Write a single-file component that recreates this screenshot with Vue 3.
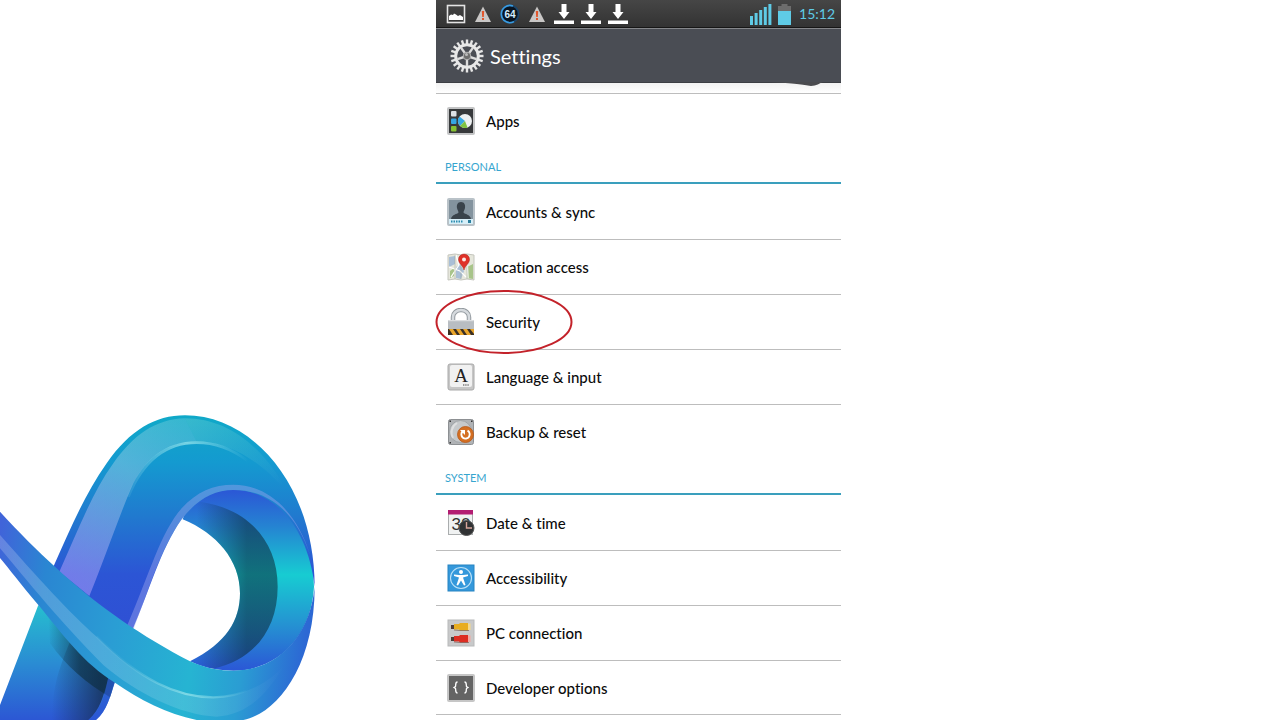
<template>
  <div class="page">
    <svg class="brand" viewBox="0 0 990 960" aria-hidden="true">
      <defs>
        <linearGradient id="rise" gradientUnits="userSpaceOnUse" x1="0" y1="46" x2="0" y2="690">
          <stop offset="0" stop-color="#10a9c8" />
          <stop offset=".22" stop-color="#149ad0" />
          <stop offset=".48" stop-color="#2178cf" />
          <stop offset=".74" stop-color="#2c55d5" />
          <stop offset="1" stop-color="#2f50d4" />
        </linearGradient>
        <linearGradient id="ring" gradientUnits="userSpaceOnUse" x1="0" y1="270" x2="0" y2="812">
          <stop offset="0" stop-color="#2b57d6" />
          <stop offset=".2" stop-color="#2583d2" />
          <stop offset=".47" stop-color="#17ccd2" />
          <stop offset=".75" stop-color="#2591d2" />
          <stop offset="1" stop-color="#2b57d6" />
        </linearGradient>
        <linearGradient id="shade" gradientUnits="userSpaceOnUse" x1="590" y1="0" x2="740" y2="0">
          <stop offset="0" stop-color="#0b2836" stop-opacity="0" />
          <stop offset="1" stop-color="#0b2836" stop-opacity=".55" />
        </linearGradient>
        <linearGradient id="sweep" gradientUnits="userSpaceOnUse" x1="0" y1="400" x2="944" y2="560">
          <stop offset="0" stop-color="#4064d9" />
          <stop offset=".16" stop-color="#2a86d2" />
          <stop offset=".4" stop-color="#2a9dd4" />
          <stop offset=".66" stop-color="#26b4d2" />
          <stop offset=".82" stop-color="#2a9dd3" />
          <stop offset="1" stop-color="#2c68d4" />
        </linearGradient>
        <linearGradient id="leg" gradientUnits="userSpaceOnUse" x1="0" y1="620" x2="0" y2="960">
          <stop offset="0" stop-color="#26bdcf" />
          <stop offset=".5" stop-color="#2a8cd3" />
          <stop offset="1" stop-color="#2c57d4" />
        </linearGradient>
        <linearGradient id="legShade" gradientUnits="userSpaceOnUse" x1="155" y1="0" x2="300" y2="0">
          <stop offset="0" stop-color="#162c50" stop-opacity="0" />
          <stop offset="1" stop-color="#162c50" stop-opacity=".75" />
        </linearGradient>
        <linearGradient id="legCast" gradientUnits="userSpaceOnUse" x1="145" y1="0" x2="240" y2="0">
          <stop offset="0" stop-color="#0c2c3d" stop-opacity="0" />
          <stop offset="1" stop-color="#0c2c3d" stop-opacity=".6" />
        </linearGradient>
        <linearGradient id="gloss" gradientUnits="userSpaceOnUse" x1="200" y1="560" x2="640" y2="100">
          <stop offset="0" stop-color="#b9a0ff" stop-opacity=".5" />
          <stop offset=".6" stop-color="#b0d8e8" stop-opacity=".4" />
          <stop offset="1" stop-color="#9fe3e3" stop-opacity=".25" />
        </linearGradient>
        <linearGradient id="glossEnd" gradientUnits="userSpaceOnUse" x1="560" y1="60" x2="850" y2="260">
          <stop offset="0" stop-color="#8fe0d8" stop-opacity=".3" />
          <stop offset="1" stop-color="#8fe0d8" stop-opacity="0" />
        </linearGradient>
        <linearGradient id="glossLow" gradientUnits="userSpaceOnUse" x1="0" y1="0" x2="860" y2="0">
          <stop offset="0" stop-color="#fff" stop-opacity=".2" />
          <stop offset=".7" stop-color="#fff" stop-opacity=".12" />
          <stop offset="1" stop-color="#fff" stop-opacity="0" />
        </linearGradient>
        <linearGradient id="line" gradientUnits="userSpaceOnUse" x1="380" y1="0" x2="745" y2="0">
          <stop offset="0" stop-color="#8fd8e8" stop-opacity=".1" />
          <stop offset=".5" stop-color="#8fe0ea" stop-opacity=".8" />
          <stop offset="1" stop-color="#8fe0ea" stop-opacity="0" />
        </linearGradient>
      </defs>

      <path fill="url(#leg)" d="M115 615L0 915V960H288C322 930 330 890 345 845L250 730Z" />
      <path fill="url(#legShade)" d="M210 725C170 820 158 870 155 960H265C300 930 310 890 325 835L250 730Z" />
      <path fill="url(#legCast)" d="M145 630L250 730L345 840L330 892C260 850 200 800 150 730Z" />
      <path fill="#2b57d4" fill-opacity=".6" d="M265 960C305 930 312 890 325 830L345 845C330 890 322 930 288 960Z" />

      <path
        fill="url(#ring)"
        d="M548 358C570 290 640 262 700 262C870 262 938 390 942 560C935 710 830 812 700 812C640 812 600 798 570 784C680 730 720 660 720 580C720 480 650 400 548 358Z"
      />
      <path
        fill="url(#shade)"
        d="M548 358L600 305C740 325 833 420 833 560C833 690 760 780 640 806L570 784C680 730 720 660 720 580C720 480 650 400 548 358Z"
      />
      <path
        fill="url(#rise)"
        d="M160 500C210 390 250 290 320 190C390 90 465 46 555 46C760 46 944 260 944 560C925 390 830 270 700 270C640 270 590 300 545 358C480 450 450 570 395 695L300 650Z"
      />
      <path
        fill="url(#gloss)"
        d="M178 515C235 390 275 280 340 190C400 105 465 58 555 55L590 125C500 125 440 175 400 250C360 340 320 460 268 588Z"
      />
      <path fill="url(#glossEnd)" d="M555 55C690 55 800 150 870 290C810 210 710 125 590 125Z" />
      <path fill="none" stroke="url(#line)" stroke-width="8" d="M385 290C430 180 500 128 590 128C650 128 700 150 742 182" />
      <path
        fill="#9fa8ee"
        fill-opacity=".42"
        d="M380 680C450 520 480 400 545 325C590 275 640 254 700 254C800 254 890 330 932 470C890 340 810 270 700 270C640 270 590 300 545 358C480 450 450 560 398 695Z"
      />

      <path
        fill="url(#sweep)"
        d="M0 335C60 400 110 450 165 500C300 625 430 710 570 784C620 806 660 812 700 812C830 812 930 710 944 560C944 800 830 940 730 960H590C500 940 420 900 345 848C250 790 190 705 115 615C60 550 30 510 0 474Z"
      />
      <path
        fill="url(#glossLow)"
        d="M0 405C110 530 210 640 290 710C420 840 530 892 640 892C740 885 800 850 850 800C790 900 730 945 650 950C540 945 410 880 310 795C180 665 80 540 0 445Z"
      />
      <path fill="none" stroke="url(#line)" stroke-width="7" d="M290 710C420 840 530 892 640 892C690 892 720 880 745 870" />
    </svg>

    <main class="phone">
      <div class="status">
        <div class="status-left">
          <svg width="20" height="20" viewBox="0 0 20 20">
            <rect x="1.500" y="1.500" width="17" height="17" fill="none" stroke="#e4e4e4" stroke-width="1.600" />
            <path d="M3 16V12L5 10.500L7 11L8 9.500L10 10.500L12 12L14 11L17 13V16Z" fill="#fff" />
          </svg>
          <svg width="20" height="20" viewBox="0 0 20 20">
            <path d="M10 2.500L18 18H2Z" fill="#c9c7c6" />
            <path d="M8.800 7H11.200L10.800 13H9.200ZM9 14H11V16H9Z" fill="#e2552b" />
          </svg>
          <svg width="20" height="20" viewBox="0 0 20 20">
            <circle cx="10" cy="10" r="8.600" fill="#091522" stroke="#1b466b" stroke-width="1.800" />
            <path d="M14 17.600A8.600 8.600 0 1 1 13 2" fill="none" stroke="#3a9be0" stroke-width="1.600" />
            <text x="10" y="14" class="badge">64</text>
          </svg>
          <svg width="20" height="20" viewBox="0 0 20 20">
            <path d="M10 2.500L18 18H2Z" fill="#c9c7c6" />
            <path d="M8.800 7H11.200L10.800 13H9.200ZM9 14H11V16H9Z" fill="#e2552b" />
          </svg>
          <svg v-for="n in 3" :key="n" width="20" height="20" viewBox="0 0 20 20">
            <path d="M7.500 0H12.500V8H15.500L10 15L4.500 8H7.500ZM0 16.500H20V20H0Z" fill="#fff" />
          </svg>
        </div>
        <div class="status-right">
          <svg width="22" height="22" viewBox="0 0 22 22">
            <path d="M0 13H3V22H0ZM4.600 10H7.600V22H4.600ZM9.200 7H12.200V22H9.200ZM13.800 4H16.800V22H13.800ZM18.400 1H21.400V22H18.400Z" fill="#5fcbe6" />
          </svg>
          <svg width="13" height="22" viewBox="0 0 13 22">
            <path d="M3.500 1H9.500V3H13V9H0V3H3.500Z" fill="#6d6d6d" />
            <path d="M0 8H13V22H0Z" fill="#5fcbe6" />
          </svg>
          <span class="clock">15:12</span>
        </div>
      </div>

      <header class="header">
        <svg width="34" height="34" viewBox="0 0 34 34">
          <g fill="#e6e6e6">
            <rect v-for="n in 20" :key="n" x="15.800" y=".5" width="2.400" height="5.500" :transform="`rotate(${n * 18} 17 17)`" />
          </g>
          <circle cx="17" cy="17" r="11.300" fill="none" stroke="#e8e8e8" stroke-width="3" />
          <g stroke="#dcdcdc" stroke-width="2.400">
            <line v-for="n in 5" :key="n" x1="17" y1="17" x2="17" y2="27" :transform="`rotate(${n * 72} 17 17)`" />
          </g>
          <circle cx="17" cy="17" r="3.800" fill="#6e6e6e" stroke="#b5b5b5" stroke-width="1" />
          <circle cx="16.500" cy="15.500" r="1.500" fill="#bbb" />
        </svg>
        <h1>Settings</h1>
        <svg class="curl" width="72" height="5" viewBox="0 0 72 5">
          <path d="M0 0H54C51 1 47 4 42 4C34 3 26 1 0 0Z" fill="#4a4b4f" />
        </svg>
      </header>

      <section v-for="group in groups" :key="group.id" class="group">
        <h2 v-if="group.title">{{ group.title }}</h2>
        <ul>
          <li v-for="item in group.items" :key="item.label">
            <button type="button" class="row">
              <svg class="icon" viewBox="0 0 28 28" aria-hidden="true">
                <template v-if="item.icon === 'apps'">
                  <rect x="1" y="1" width="26" height="26" rx="1" fill="#37393b" stroke="#c3c4c5" stroke-width="2" />
                  <rect x="4" y="4" width="5.500" height="5.500" rx="1" fill="#dde1e5" />
                  <rect x="4" y="11.500" width="5.500" height="5.500" rx="1" fill="#35a6e3" />
                  <rect x="4" y="19" width="5.500" height="5.500" rx="1" fill="#86c232" />
                  <circle cx="18" cy="14" r="7" fill="#eef1f2" />
                  <path d="M18 14L12.500 9.500A7 7 0 0 0 13 19Z" fill="#38a9e2" />
                  <path d="M18 14L13 19A7 7 0 0 0 20.500 20.500Z" fill="#80c341" />
                </template>
                <template v-else-if="item.icon === 'accounts'">
                  <rect x="1" y="1" width="26" height="26" rx="1" fill="#83939e" stroke="#b9c2c8" stroke-width="2" />
                  <path d="M14 4C17.500 4 18.500 7 18 10C17.700 12 16.500 13 16.500 14.500C18 16.500 23 16 24 21H4C5 16 10 16.500 11.500 14.500C11.500 13 10.300 12 10 10C9.500 7 10.500 4 14 4Z" fill="#39434b" />
                  <path d="M2 21H26V26H2Z" fill="#d7eff8" />
                  <path d="M4 23.500H16" stroke="#2b8cb0" stroke-width="2" stroke-dasharray="1.500 1" />
                  <path d="M21 22H24V25H21Z" fill="#287e9e" />
                </template>
                <template v-else-if="item.icon === 'location'">
                  <path d="M1 2L8 1L14 2L20 1L27 2V27L20 26L14 27L8 26L1 27Z" fill="#e6e7dc" stroke="#c5c6be" />
                  <path d="M2 4L8 3V11L2 14ZM9 14L13 11L17 18L14 26L9 25Z" fill="#a9bfd6" />
                  <path d="M20 14L26 11V26L20 25ZM3 18L7 15V23L3 25Z" fill="#a8c48a" />
                  <path d="M2 14L13 18L19 24M9 2L12 12L4 24M20 3L21 25" fill="none" stroke="#fff" stroke-width="1.300" />
                  <path d="M8 2V26M14 2V26M20 2V26" stroke="#9fa49b" stroke-width=".5" />
                  <path d="M17 17C16 12 11.500 11 11.500 6.500A5.500 5.500 0 0 1 22.500 6.500C22.500 11 18 12 17 17Z" fill="#df3128" stroke="#aa221d" stroke-width=".5" />
                  <circle cx="17" cy="6.500" r="2" fill="#fbe9e5" />
                </template>
                <template v-else-if="item.icon === 'security'">
                  <path d="M6 15V9A8 7 0 0 1 22 9V15" fill="none" stroke="#92999e" stroke-width="4.500" />
                  <path d="M6 15V9A8 7 0 0 1 22 9V15" fill="none" stroke="#d6dade" stroke-width="2.500" />
                  <rect x="1" y="12" width="26" height="15" rx="1" fill="#b8bdc2" />
                  <path d="M1.500 12.700H26.500" stroke="#e4e6e8" />
                  <rect x="1" y="21" width="26" height="6" fill="#3b3025" />
                  <path d="M2 21H6L10 27H6ZM9 21H13L17 27H13ZM16 21H20L24 27H20ZM23 21H27V26Z" fill="#e9a52b" />
                </template>
                <template v-else-if="item.icon === 'language'">
                  <rect x="1" y="1" width="26" height="26" rx="2" fill="#c6c6c6" stroke="#aaa" />
                  <rect x="3" y="2" width="22" height="22" rx="2" fill="#f1f1f1" />
                  <text x="14" y="19" class="letter">A</text>
                  <path d="M16 22H22" stroke="#444" stroke-width="1.200" stroke-dasharray="1.400 .8" />
                </template>
                <template v-else-if="item.icon === 'backup'">
                  <rect x="1.500" y="1.500" width="25" height="25" rx="2" fill="#b0b3b6" stroke="#8d9093" />
                  <circle cx="13.500" cy="13.500" r="11" fill="#c6c9cb" stroke="#a0a4a7" />
                  <path d="M6 20A11 11 0 0 1 10 5" fill="none" stroke="#dedfe0" stroke-width="2" />
                  <path d="M2.500 2.500H4V4H2.500ZM24 2.500H25.500V4H24ZM2.500 24H4V25.500H2.500Z" fill="#333" />
                  <circle cx="18.500" cy="16.500" r="8" fill="#d46f22" stroke="#b6581a" stroke-width=".8" />
                  <path d="M15.500 13.500A4.200 4.200 0 1 0 20.500 12.700" fill="none" stroke="#fff" stroke-width="1.900" />
                  <path d="M13 12H18V17Z" fill="#fff" />
                </template>
                <template v-else-if="item.icon === 'date'">
                  <rect x="1.500" y="1.500" width="24" height="24" fill="#f0f2f2" stroke="#aaadae" />
                  <rect x="1" y="1" width="25" height="4.500" fill="#b31d72" />
                  <text x="14" y="21" class="day">30</text>
                  <circle cx="19.500" cy="19" r="7.500" fill="#303234" stroke="#555" />
                  <path d="M19.500 13V19H25" fill="none" stroke="#d9a59b" stroke-width="1.400" />
                </template>
                <template v-else-if="item.icon === 'accessibility'">
                  <rect x="1" y="1" width="26" height="26" fill="#3498db" stroke="#2684c2" />
                  <circle cx="14" cy="14" r="10.500" fill="none" stroke="#b9e0f7" stroke-width="1.100" />
                  <circle cx="14" cy="8" r="2" fill="#fff" />
                  <path d="M7 10.500L12 11H16L21 10.500V12L16 13.500L18.500 21L17 21.500L14 16.500L11 21.500L9.500 21L12 13.500L7 12Z" fill="#fff" />
                </template>
                <template v-else-if="item.icon === 'pc'">
                  <rect x="1" y="1" width="26" height="26" fill="#c8c9ca" stroke="#b8b9ba" />
                  <path d="M4 6H8V10H4ZM4 18H8V22H4Z" fill="#4e3c38" />
                  <path d="M7 5H12L13 4H21V11.500H13L12 10.500H7Z" fill="#e8ad20" />
                  <path d="M7 17H12L13 16H21V23.500H13L12 22.500H7Z" fill="#dc2d22" />
                  <path d="M21 4.500H23.500V11H21Z" fill="#f6d889" />
                  <path d="M21 16.500H23.500V23H21Z" fill="#f3a6a0" />
                  <path d="M7 11L12 11.500H22M7 23L12 23.500H22" fill="none" stroke="#705047" stroke-width=".6" />
                </template>
                <template v-else>
                  <rect x="1" y="1" width="26" height="26" rx="1" fill="#646464" stroke="#c6c6c6" stroke-width="2" />
                  <path d="M10.500 8C8 8 9 11 8.500 12.500L7 13.500L8.500 14.500C9 16 8 19 10.500 19M17.500 8C20 8 19 11 19.500 12.500L21 13.500L19.500 14.500C19 16 20 19 17.500 19" fill="none" stroke="#fff" stroke-width="1.300" />
                </template>
              </svg>
              <span>{{ item.label }}</span>
            </button>
            <svg v-if="item.marked" class="mark" viewBox="0 0 138 64" aria-hidden="true">
              <ellipse cx="69" cy="32" rx="67.500" ry="31" fill="none" stroke="#c3222a" stroke-width="2" />
            </svg>
          </li>
        </ul>
      </section>
    </main>
  </div>
</template>

<script setup>
const groups = [
  {
    id: 'device',
    title: '',
    items: [{ label: 'Apps', icon: 'apps' }]
  },
  {
    id: 'personal',
    title: 'PERSONAL',
    items: [
      { label: 'Accounts & sync', icon: 'accounts' },
      { label: 'Location access', icon: 'location' },
      { label: 'Security', icon: 'security', marked: true },
      { label: 'Language & input', icon: 'language' },
      { label: 'Backup & reset', icon: 'backup' }
    ]
  },
  {
    id: 'system',
    title: 'SYSTEM',
    items: [
      { label: 'Date & time', icon: 'date' },
      { label: 'Accessibility', icon: 'accessibility' },
      { label: 'PC connection', icon: 'pc' },
      { label: 'Developer options', icon: 'developer' }
    ]
  }
]
</script>

<style>
body {
  background: #fff;
}
</style>

<style scoped>
.page {
  display: grid;
  grid-template-columns: 436fr 405fr 439fr;
  height: 100vh;
  overflow: hidden;
  font-family: Lato, "Open Sans", sans-serif;
  font-variant-ligatures: none;
}

.brand {
  align-self: end;
  width: 330px;
  max-width: 100%;
  display: block;
}

.phone {
  grid-column: 2;
  min-width: 0;
}

.status {
  display: flex;
  justify-content: space-between;
  align-items: center;
  height: 28px;
  box-sizing: border-box;
  padding: 0 6px 0 10px;
  background: linear-gradient(#464646, #333);
  border-bottom: 1px solid #161616;
}

.status-left {
  display: flex;
  gap: 7px;
}

.status-right {
  display: flex;
  align-items: center;
  gap: 6px;
}

.badge {
  font: bold 10px "Liberation Sans", sans-serif;
  fill: #d6efff;
  text-anchor: middle;
}

.clock {
  margin-left: 2px;
  color: #5fcbe6;
  font-size: 14px;
  line-height: 20px;
}

.header {
  position: relative;
  display: flex;
  align-items: center;
  gap: 6px;
  height: 55px;
  box-sizing: border-box;
  padding: 0 14px;
  background: #4a4d54;
  border-top: 1px solid #85878b;
  border-bottom: 1px solid #3c3e43;
}

.header h1 {
  margin: 0;
  color: #fff;
  font-size: 20px;
  font-weight: 400;
  line-height: 24px;
}

.curl {
  position: absolute;
  top: 100%;
  right: 0;
}

.group:nth-of-type(1) {
  padding-top: 10px;
  background: linear-gradient(#f1f1f1, #fff 10px);
}

.group:nth-of-type(1) li {
  border-top: 1px solid #bdbdbd;
}

.group h2 {
  margin: 0;
  height: 36px;
  box-sizing: border-box;
  padding: 10px 9px 0;
  border-bottom: 2px solid #3a9fbd;
  color: #36a5cf;
  font-size: 11px;
  font-weight: 400;
  line-height: 18px;
}

ul {
  margin: 0;
  padding: 0;
  list-style: none;
}

li {
  position: relative;
  height: 55px;
  box-sizing: border-box;
}

li + li {
  border-top: 1px solid #bdbdbd;
}

.group:last-child li:last-child {
  border-bottom: 1px solid #bdbdbd;
}

.row {
  display: flex;
  align-items: center;
  gap: 11px;
  width: 100%;
  height: 100%;
  padding: 0 11px;
  border: none;
  background: none;
  color: #0c0c0c;
  font-family: inherit;
  font-size: 15px;
  font-weight: 500;
  font-variant-ligatures: none;
  line-height: 20px;
  text-align: left;
  cursor: pointer;
}

.icon {
  flex: none;
  width: 28px;
  height: 28px;
}

.letter {
  font: 19px "Liberation Serif", serif;
  fill: #222;
  text-anchor: middle;
}

.day {
  font: 17px "Liberation Sans", sans-serif;
  fill: #333;
  text-anchor: middle;
}

.mark {
  position: absolute;
  top: -5px;
  left: -1px;
  z-index: 1;
  width: 138px;
  height: 64px;
  pointer-events: none;
}
</style>
